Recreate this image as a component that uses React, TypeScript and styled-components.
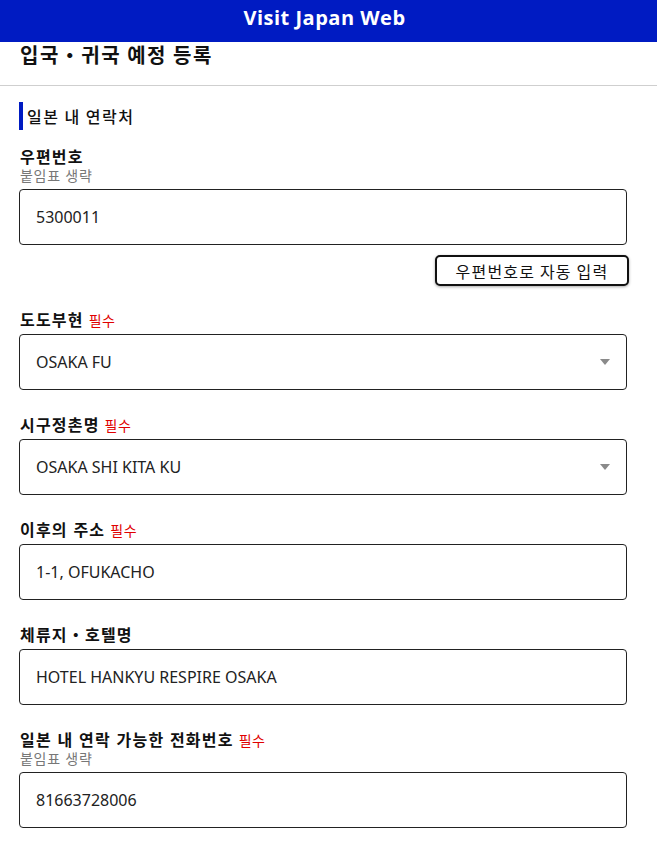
import React from "react";
import styled, { createGlobalStyle } from "styled-components";

const Global = createGlobalStyle`
  html, body { margin: 0; padding: 0; background: #fff; }
  body { font-family: "Noto Sans", "Noto Sans CJK KR", sans-serif; color: #111; }
  * { box-sizing: border-box; }
`;

const Page = styled.div`
  width: 657px;
  min-height: 853px;
  background: #fff;
`;

const Header = styled.header`
  height: 42px;
  background: #001bc2;
  display: flex;
  align-items: center;
  justify-content: center;
`;

const Brand = styled.h1`
  margin: 0;
  color: #fff;
  font-family: "Open Sans", sans-serif;
  font-weight: 700;
  font-size: 20px;
  line-height: 24px;
  letter-spacing: 0.5px;
  transform: translate(-4px, -3px);
`;

const TitleBar = styled.div`
  height: 44px;
  border-bottom: 1px solid #cfcfcf;
  padding: 0 20px 0;
`;

const Title = styled.h2`
  margin: 0;
  font-family: "Noto Sans CJK KR", sans-serif;
  font-size: 20px;
  font-weight: 700;
  line-height: 26px;
  letter-spacing: 1.5px;
  color: #111;
`;

const Content = styled.main`
  padding: 16px 30px 0 19px;
  display: flex;
  flex-direction: column;
`;

const SectionHeading = styled.h3`
  margin: 0 0 17px;
  height: 28px;
  border-left: 4px solid #001bc2;
  padding-left: 4px;
  display: flex;
  align-items: center;
  font-family: "Noto Sans CJK KR", sans-serif;
  font-size: 16px;
  font-weight: 500;
  letter-spacing: 1.5px;
  color: #111;
`;

const Field = styled.div<{ $gap?: number }>`
  display: flex;
  flex-direction: column;
  margin-bottom: ${(p) => p.$gap ?? 25}px;
`;

const Label = styled.label`
  display: flex;
  align-items: baseline;
  gap: 5px;
  height: 20px;
  padding: 1px 0 0 1px;
  font-family: "Liberation Sans", "Noto Sans CJK KR", sans-serif;
  font-size: 16px;
  font-weight: 700;
  line-height: 19px;
  letter-spacing: 1.2px;
  color: #111;
`;

const Required = styled.span`
  font-size: 14px;
  font-weight: 400;
  line-height: 19px;
  letter-spacing: 0.5px;
  color: #e00000;
`;

const Hint = styled.div`
  height: 18px;
  padding: 1px 0 0 1px;
  font-family: "Liberation Sans", "Noto Sans CJK KR", sans-serif;
  font-size: 14px;
  line-height: 17px;
  letter-spacing: 0.7px;
  color: #777;
`;

const Box = styled.div`
  margin-top: 4px;
  height: 56px;
  border: 1px solid #222;
  border-radius: 4px;
  display: flex;
  align-items: center;
  padding: 0 16px;
  font-family: "Noto Sans", "Noto Sans CJK KR", sans-serif;
  font-size: 16px;
  color: #222;
`;

const Arrow = styled.span`
  margin-left: auto;
  width: 0;
  height: 0;
  border-left: 5px solid transparent;
  border-right: 5px solid transparent;
  border-top: 6px solid #8a8a8a;
`;

const ButtonRow = styled.div`
  display: flex;
  justify-content: flex-end;
  margin: 10px -2px 0 0;
`;

const AutoButton = styled.button`
  height: 31px;
  width: 194px;
  border: 2.5px solid #111;
  border-radius: 5px;
  background: #fff;
  box-shadow: 0 1px 3px rgba(0, 0, 0, 0.35);
  font-family: "Noto Sans CJK KR", sans-serif;
  font-size: 16px;
  letter-spacing: 1.2px;
  color: #111;
  padding: 0;
  cursor: pointer;
`;

type FieldDef = {
  label: string;
  value: string;
  required?: boolean;
  hint?: string;
  select?: boolean;
};

const fields: FieldDef[] = [
  { label: "도도부현", value: "OSAKA FU", required: true, select: true },
  { label: "시구정촌명", value: "OSAKA SHI KITA KU", required: true, select: true },
  { label: "이후의 주소", value: "1-1, OFUKACHO", required: true },
  { label: "체류지・호텔명", value: "HOTEL HANKYU RESPIRE OSAKA" },
  {
    label: "일본 내 연락 가능한 전화번호",
    value: "81663728006",
    required: true,
    hint: "붙임표 생략",
  },
];

export default function App() {
  return (
    <Page>
      <Global />
      <Header>
        <Brand>Visit Japan Web</Brand>
      </Header>
      <TitleBar>
        <Title>입국・귀국 예정 등록</Title>
      </TitleBar>
      <Content>
        <SectionHeading>일본 내 연락처</SectionHeading>
        <Field $gap={24}>
          <Label>우편번호</Label>
          <Hint>붙임표 생략</Hint>
          <Box>5300011</Box>
          <ButtonRow>
            <AutoButton>우편번호로 자동 입력</AutoButton>
          </ButtonRow>
        </Field>
        {fields.map((f) => (
          <Field key={f.label}>
            <Label>
              {f.label}
              {f.required && <Required>필수</Required>}
            </Label>
            {f.hint && <Hint>{f.hint}</Hint>}
            <Box>
              {f.value}
              {f.select && <Arrow />}
            </Box>
          </Field>
        ))}
      </Content>
    </Page>
  );
}
